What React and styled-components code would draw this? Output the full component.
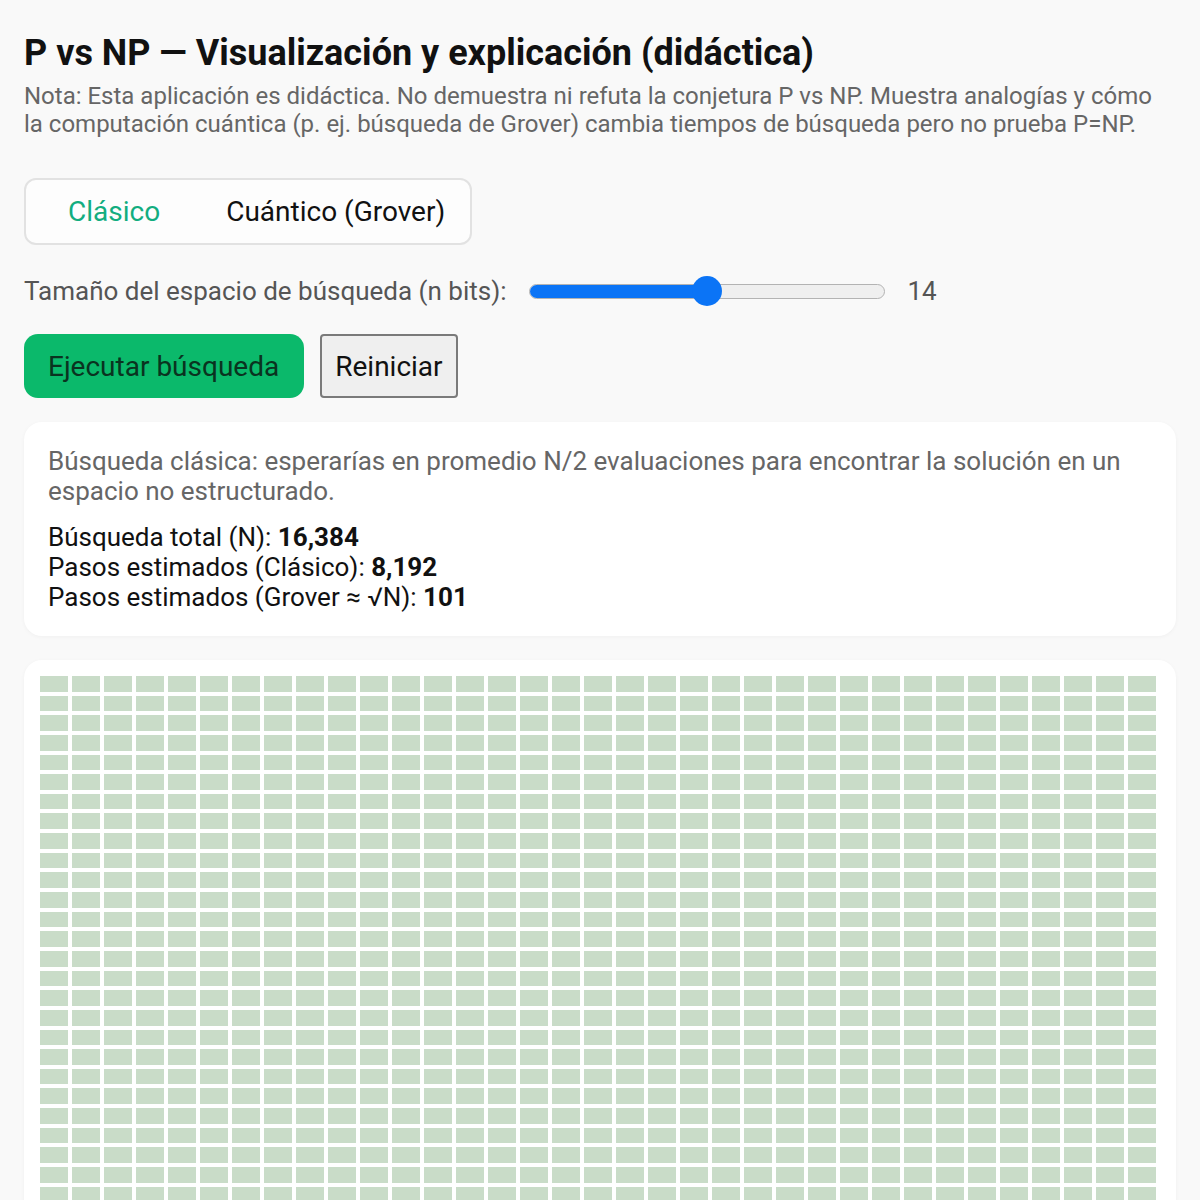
import React, { useState, useMemo } from "react";
import styled, { createGlobalStyle } from "styled-components";

const GlobalStyle = createGlobalStyle`
  * { box-sizing: border-box; }
  body {
    margin: 0;
    background: #f9f9f9;
    font-family: Roboto, "Noto Sans", "Liberation Sans", sans-serif;
    color: #111;
  }
`;

const Page = styled.div`
  padding: 32px 24px 24px;
`;

const Title = styled.h1`
  margin: 0;
  font-size: 36px;
  line-height: 43px;
  font-weight: 700;
  color: #111;
`;

const Note = styled.p`
  margin: 7px 0 0;
  font-size: 24px;
  line-height: 28px;
  color: #666;
`;

const TabBar = styled.div`
  display: inline-flex;
  align-items: center;
  gap: 66px;
  height: 67px;
  margin-top: 40px;
  padding: 0 25px 0 42px;
  background: #fdfdfd;
  border: 2px solid #e2e2e2;
  border-radius: 12px;
`;

const Tab = styled.button`
  padding: 0;
  border: none;
  background: none;
  font-family: inherit;
  font-size: 28px;
  color: ${(p) => (p.$active ? "#12ad80" : "#111")};
  cursor: pointer;
`;

const SliderRow = styled.div`
  display: flex;
  align-items: center;
  height: 40px;
  margin-top: 26px;
`;

const Label = styled.span`
  font-size: 26px;
  color: #555;
`;

const Slider = styled.div`
  position: relative;
  display: flex;
  align-items: center;
  width: 356px;
  height: 30px;
  margin: 0 23px 0 22px;
  cursor: pointer;
`;

const Track = styled.div`
  position: relative;
  width: 100%;
  height: 15px;
  border: 1.5px solid #b3b3b3;
  border-radius: 8px;
  background: #efefef;
  overflow: hidden;
`;

const Fill = styled.div`
  position: absolute;
  left: -2px;
  top: -2px;
  bottom: -2px;
  background: #0b74f6;
`;

const Thumb = styled.div`
  position: absolute;
  top: 0;
  width: 30px;
  height: 30px;
  margin-left: -15px;
  border-radius: 50%;
  background: #0b74f6;
`;

const Value = styled.span`
  font-size: 26px;
  color: #555;
`;

const Actions = styled.div`
  display: flex;
  gap: 16px;
  margin-top: 23px;
`;

const RunButton = styled.button`
  height: 64px;
  padding: 0 25px 0 24px;
  border: none;
  border-radius: 14px;
  background: #0bb96b;
  color: #0a3320;
  font-family: inherit;
  font-size: 28px;
  cursor: pointer;
`;

const ResetButton = styled.button`
  height: 64px;
  padding: 0 13px;
  border: 2px solid #7a7a7a;
  border-radius: 4px;
  background: #efefef;
  color: #111;
  font-family: inherit;
  font-size: 28px;
  cursor: pointer;
`;

const Card = styled.div`
  margin-top: 24px;
  padding: ${(p) => p.$pad || "24px"};
  background: #fff;
  border-radius: 18px;
  box-shadow: 0 1px 4px rgba(0, 0, 0, 0.04);
`;

const Desc = styled.p`
  margin: 0;
  font-size: 26px;
  line-height: 30px;
  color: #666;
`;

const Stats = styled.div`
  margin-top: 16px;
  font-size: 26px;
  line-height: 30px;
  color: #111;

  b {
    font-weight: 700;
  }
`;

const Grid = styled.div`
  display: grid;
  grid-template-columns: repeat(auto-fill, 28px);
  gap: 4px;
`;

const Cell = styled.div`
  height: 15.65px;
  background: ${(p) => (p.$found ? "#0bb96b" : p.$seen ? "#9cc7a8" : "#c9dcc8")};
`;

const fmt = (n) => n.toLocaleString("en-US");

export default function App() {
  const [mode, setMode] = useState("classic");
  const [bits, setBits] = useState(14);
  const min = 4;
  const max = 24;
  const N = 2 ** bits;
  const classic = N / 2;
  const grover = Math.round(Math.sqrt(N) * 0.79);
  const pct = ((bits - min) / (max - min)) * 100;

  const cells = useMemo(() => Array.from({ length: N }, (_, i) => i), [N]);

  const onSlide = (e) => {
    const r = e.currentTarget.getBoundingClientRect();
    const f = Math.min(1, Math.max(0, (e.clientX - r.left - 15) / (r.width - 30)));
    setBits(Math.round(min + f * (max - min)));
  };

  return (
    <>
      <GlobalStyle />
      <Page>
        <Title>P vs NP — Visualización y explicación (didáctica)</Title>
        <Note>
          Nota: Esta aplicación es didáctica. No demuestra ni refuta la conjetura P vs NP. Muestra
          analogías y cómo la computación cuántica (p. ej. búsqueda de Grover) cambia tiempos de
          búsqueda pero no prueba P=NP.
        </Note>

        <TabBar>
          <Tab $active={mode === "classic"} onClick={() => setMode("classic")}>
            Clásico
          </Tab>
          <Tab $active={mode === "grover"} onClick={() => setMode("grover")}>
            Cuántico (Grover)
          </Tab>
        </TabBar>

        <SliderRow>
          <Label>Tamaño del espacio de búsqueda (n bits):</Label>
          <Slider onClick={onSlide}>
            <Track>
              <Fill style={{ width: `calc(${pct}% + 2px)` }} />
            </Track>
            <Thumb style={{ left: `calc(15px + (100% - 30px) * ${pct / 100})` }} />
          </Slider>
          <Value>{bits}</Value>
        </SliderRow>

        <Actions>
          <RunButton>Ejecutar búsqueda</RunButton>
          <ResetButton>Reiniciar</ResetButton>
        </Actions>

        <Card>
          <Desc>
            {mode === "classic"
              ? "Búsqueda clásica: esperarías en promedio N/2 evaluaciones para encontrar la solución en un espacio no estructurado."
              : "Búsqueda de Grover: con amplificación de amplitud bastan unas √N consultas al oráculo, una mejora cuadrática, no exponencial."}
          </Desc>
          <Stats>
            <div>
              Búsqueda total (N): <b>{fmt(N)}</b>
            </div>
            <div>
              Pasos estimados (Clásico): <b>{fmt(classic)}</b>
            </div>
            <div>
              Pasos estimados (Grover ≈ √N): <b>{fmt(grover)}</b>
            </div>
          </Stats>
        </Card>

        <Card $pad="16px">
          <Grid>
            {cells.map((i) => (
              <Cell key={i} />
            ))}
          </Grid>
        </Card>
      </Page>
    </>
  );
}
